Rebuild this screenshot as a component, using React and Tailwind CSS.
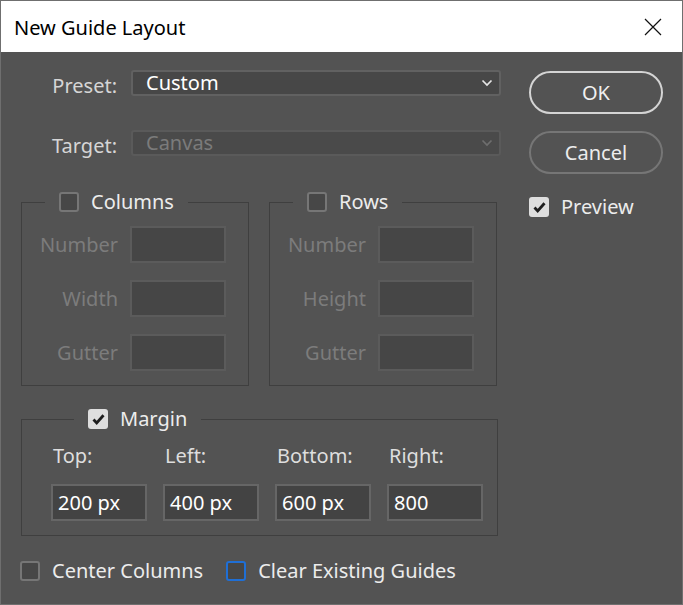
import React from 'react';

const font = { fontFamily: '"Noto Sans", "Liberation Sans", sans-serif' };

const Chevron = ({ color }) => (
  <svg width="12" height="8" viewBox="0 0 12 8" fill="none">
    <path d="M1.5 1.5l4.5 4.5 4.5-4.5" stroke={color} strokeWidth="1.7" />
  </svg>
);

const Check = () => (
  <svg width="15" height="15" viewBox="0 0 15 15" fill="none">
    <path d="M2.5 7.5l3.2 3.4 6.8-7.6" stroke="#1e1e1e" strokeWidth="2.8" />
  </svg>
);

const Checkbox = ({ checked = false, focus = false }) =>
  checked ? (
    <div className="w-[20px] h-[20px] rounded-[3px] bg-[#dedede] flex items-center justify-center shrink-0">
      <Check />
    </div>
  ) : (
    <div
      className={`w-[20px] h-[20px] rounded-[3px] border-2 shrink-0 bg-[#474747] ${
        focus ? 'border-[#1f6fd6]' : 'border-[#767676]'
      }`}
    />
  );

const SelectRow = ({ label, value, disabled }) => (
  <div className="flex items-center h-[26px]">
    <div className="w-[96px] text-right text-[20px] text-[#d6d6d6] pt-[5px]">{label}</div>
    <div
      className={`ml-[14px] w-[370px] h-[26px] rounded-[3px] border-2 flex items-center justify-between pl-[13px] pr-[6px] ${
        disabled ? 'bg-[#4a4a4a] border-[#5a5a5a]' : 'bg-[#474747] border-[#616161]'
      }`}
    >
      <span className={`text-[20px] leading-none ${disabled ? 'text-[#7b7b7b]' : 'text-white'}`}>{value}</span>
      <Chevron color={disabled ? '#6e6e6e' : '#e6e6e6'} />
    </div>
  </div>
);

const DisabledField = ({ label }) => (
  <div className="flex items-center">
    <div className="w-[96px] text-right text-[20px] text-[#7c7c7c]">{label}</div>
    <div className="ml-[12px] w-[96px] h-[37px] border-2 border-[#5b5b5b] bg-[#464646]" />
  </div>
);

const GuideGroup = ({ title, fields }) => (
  <fieldset className="w-[228px] border border-[#3f3f3f] pt-[9px] pb-[14px] flex flex-col gap-[17px]">
    <legend className="ml-[23px] px-[14px] flex items-center gap-[12px]">
      <Checkbox />
      <span className="text-[20px] text-[#ececec]">{title}</span>
    </legend>
    {fields.map((f) => (
      <DisabledField key={f} label={f} />
    ))}
  </fieldset>
);

const MarginInput = ({ label, value }) => (
  <div className="flex flex-col w-[96px]">
    <div className="text-[20px] text-[#dedede] pl-[2px] h-[29px]">{label}</div>
    <div className="mt-[14px] h-[37px] border-2 border-[#666666] bg-[#434343] flex items-center pl-[5px]">
      <span className="text-[20px] text-white">{value}</span>
    </div>
  </div>
);

export default function App() {
  return (
    <div className="w-[683px] h-[605px] border border-[#6f6f6f] flex flex-col overflow-hidden" style={font}>
      {/* Title bar */}
      <div className="h-[51px] bg-white flex items-center justify-between pl-[13px] pr-[20px] shrink-0">
        <span className="text-[20px] text-black pt-[3px]">New Guide Layout</span>
        <svg width="18" height="18" viewBox="0 0 18 18">
          <path d="M1 1l16 16M17 1L1 17" stroke="#111" strokeWidth="1.2" />
        </svg>
      </div>

      {/* Body */}
      <div className="flex-1 bg-[#535353] flex">
        <div className="w-[508px] pl-[20px] pt-[18px] flex flex-col">
          <SelectRow label="Preset:" value="Custom" />
          <div className="h-[34px]" />
          <SelectRow label="Target:" value="Canvas" disabled />

          <div className="mt-[31px] flex gap-[20px]">
            <GuideGroup title="Columns" fields={['Number', 'Width', 'Gutter']} />
            <GuideGroup title="Rows" fields={['Number', 'Height', 'Gutter']} />
          </div>

          <fieldset className="mt-[18px] w-[477px] border border-[#3f3f3f] pt-[7px] pb-[14px] pl-[29px] flex gap-[16px]">
            <legend className="ml-[23px] px-[14px] flex items-center gap-[12px]">
              <Checkbox checked />
              <span className="text-[20px] text-[#ececec]">Margin</span>
            </legend>
            <MarginInput label="Top:" value="200 px" />
            <MarginInput label="Left:" value="400 px" />
            <MarginInput label="Bottom:" value="600 px" />
            <MarginInput label="Right:" value="800" />
          </fieldset>

          <div className="mt-[20px] -ml-[1px] flex items-center">
            <Checkbox />
            <span className="ml-[12px] text-[20px] text-[#ececec]">Center Columns</span>
            <div className="ml-[23px]">
              <Checkbox focus />
            </div>
            <span className="ml-[12px] text-[20px] text-[#ececec]">Clear Existing Guides</span>
          </div>
        </div>

        <div className="pl-[20px] pt-[19px] flex flex-col">
          <button className="w-[134px] h-[43px] rounded-full border-2 border-[#d4d4d4] text-[20px] text-[#f0f0f0]">
            OK
          </button>
          <button className="mt-[17px] w-[134px] h-[43px] rounded-full border-2 border-[#767676] text-[20px] text-[#ececec]">
            Cancel
          </button>
          <div className="mt-[18px] flex items-center">
            <Checkbox checked />
            <span className="ml-[12px] text-[20px] text-[#ececec]">Preview</span>
          </div>
        </div>
      </div>
    </div>
  );
}
